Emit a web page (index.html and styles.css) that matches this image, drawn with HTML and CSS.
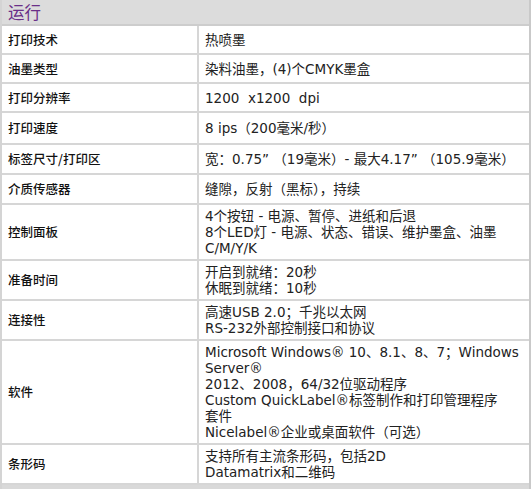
FILE: index.html
```html
<!DOCTYPE html>
<html lang="zh-CN">
<head>
<meta charset="utf-8">
<title>运行</title>
<link rel="stylesheet" href="styles.css">
</head>
<body>
<div class="spec">
  <div class="spec-head">运行</div>

  <div class="row h29"><div class="label">打印技术</div><div class="value">热喷墨</div></div>
  <div class="row h29"><div class="label">油墨类型</div><div class="value">染料油墨，(4)个CMYK墨盒</div></div>
  <div class="row h29"><div class="label">打印分辨率</div><div class="value">1200&nbsp; x1200&nbsp; dpi</div></div>
  <div class="row h32"><div class="label">打印速度</div><div class="value">8 ips（200毫米/秒）</div></div>
  <div class="row h30"><div class="label">标签尺寸/打印区</div><div class="value">宽：0.75” （19毫米）- 最大4.17” （105.9毫米）</div></div>
  <div class="row h30"><div class="label">介质传感器</div><div class="value">缝隙，反射（黑标），持续</div></div>
  <div class="row"><div class="label">控制面板</div><div class="value">
    <span class="line">4个按钮 - 电源、暂停、进纸和后退</span>
    <span class="line">8个LED灯 - 电源、状态、错误、维护墨盒、油墨</span>
    <span class="line">C/M/Y/K</span>
  </div></div>
  <div class="row"><div class="label">准备时间</div><div class="value">
    <span class="line">开启到就绪：20秒</span>
    <span class="line">休眠到就绪：10秒</span>
  </div></div>
  <div class="row"><div class="label">连接性</div><div class="value">
    <span class="line">高速USB 2.0；千兆以太网</span>
    <span class="line">RS-232外部控制接口和协议</span>
  </div></div>
  <div class="row"><div class="label">软件</div><div class="value">
    <span class="line">Microsoft Windows® 10、8.1、8、7；Windows</span>
    <span class="line">Server®</span>
    <span class="line">2012、2008，64/32位驱动程序</span>
    <span class="line">Custom QuickLabel®标签制作和打印管理程序</span>
    <span class="line">套件</span>
    <span class="line">Nicelabel®企业或桌面软件（可选）</span>
  </div></div>
  <div class="row"><div class="label">条形码</div><div class="value">
    <span class="line">支持所有主流条形码，包括2D</span>
    <span class="line">Datamatrix和二维码</span>
  </div></div>
  <div class="spec-foot"></div>
</div>
</body>
</html>
```
FILE: styles.css
```css
html, body {
  margin: 0;
  padding: 0;
  background: #ffffff;
}

.spec {
  width: 531px;
  box-sizing: border-box;
  border-left: 2px solid #d4d4d4;
  border-right: 2px solid #c9c9c9;
  font-family: "Noto Sans CJK SC", sans-serif;
  color: #1c1c1c;
}

.spec-head {
  height: 24px;
  padding: 0 6px;
  background: #dcdcdc;
  border-bottom: 2px solid #cdcdcd;
  color: #6a2f88;
  font-size: 16.5px;
  line-height: 24px;
}

.row {
  display: grid;
  grid-template-columns: 197px 1fr;
  border-bottom: 2px solid #d6d6d6;
}

.row.h29 { min-height: 27px; }
.row.h30 { min-height: 28px; }
.row.h32 { min-height: 30px; }

.label {
  display: flex;
  align-items: center;
  padding: 0 6px;
  border-right: 2px solid #d6d6d6;
  font-size: 12.5px;
  font-weight: 500;
  color: #111111;
  line-height: 16px;
}

.value {
  display: flex;
  flex-direction: column;
  justify-content: center;
  padding: 3px 6px;
  font-family: "DejaVu Sans", "Noto Sans CJK SC", sans-serif;
  font-size: 13.5px;
  line-height: 16px;
  color: #222222;
  white-space: nowrap;
}

.line {
  display: block;
}

.spec-foot {
  height: 4px;
  background: #d9d9d9;
}
```
